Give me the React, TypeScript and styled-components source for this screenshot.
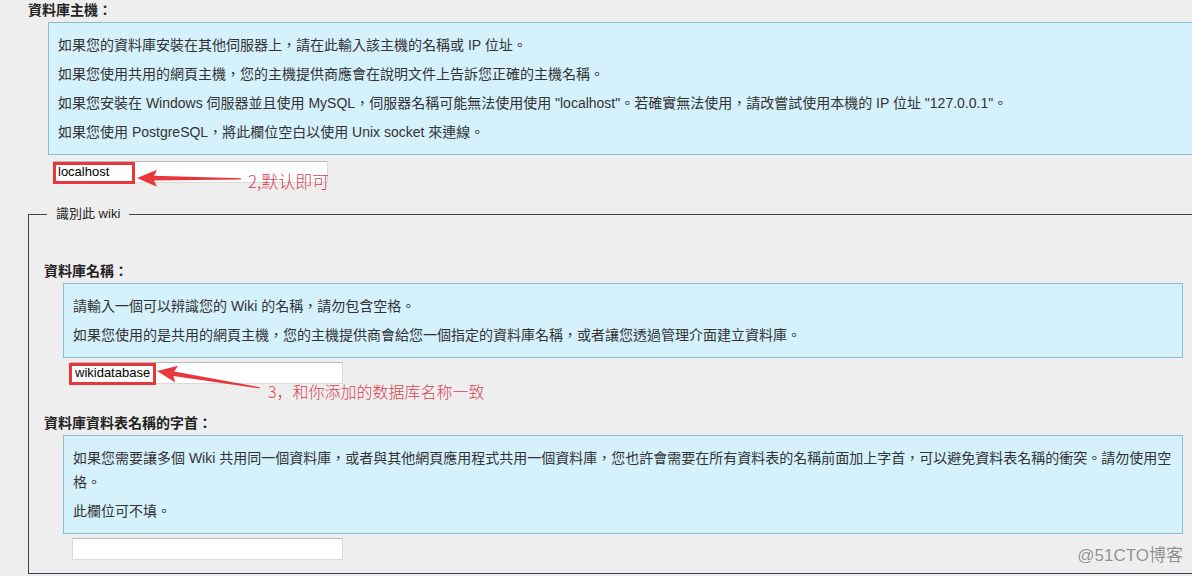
import React from "react";
import styled, { createGlobalStyle } from "styled-components";

const GlobalStyle = createGlobalStyle`
  html, body {
    margin: 0;
    padding: 0;
    background: #eeeeee;
    overflow: hidden;
  }
  body {
    font-family: "Liberation Sans", Arial, "Noto Sans CJK TC", sans-serif;
    font-size: 14px;
    color: #333333;
  }
`;

const Page = styled.div`
  position: relative;
  width: 1192px;
  height: 576px;
  overflow: hidden;
  padding-top: 1px;
  box-sizing: border-box;
`;

const TopSection = styled.section`
  padding-left: 28px;
`;

const FieldLabel = styled.div<{ $top?: number }>`
  margin: ${(p) => p.$top ?? 0}px 0 3px 0;
  font-size: 14px;
  font-weight: bold;
  line-height: 18px;
  color: #222222;
`;

const HelpBox = styled.div<{ $indent: number; $bleed?: boolean }>`
  margin-left: ${(p) => p.$indent}px;
  margin-right: ${(p) => (p.$bleed ? "-12px" : "0")};
  background: #d4f1fc;
  border: 1px solid #8ebdd0;
  padding: 10px 10px 10px 9px;
  display: flex;
  flex-direction: column;
  gap: 5px;
`;

const HelpText = styled.p`
  margin: 0;
  line-height: 24px;
  color: #333333;
`;

const InputRow = styled.div<{ $indent: number; $gap: number; $width: number }>`
  position: relative;
  margin: ${(p) => p.$gap}px 0 0 ${(p) => p.$indent}px;
  width: ${(p) => p.$width}px;
  height: 22px;
`;

const TextField = styled.input`
  box-sizing: border-box;
  display: block;
  width: 100%;
  height: 100%;
  margin: 0;
  padding: 0 4px 2px 4px;
  border: 1px solid #dadada;
  border-top-color: #b9b9b9;
  background: #ffffff;
  font-family: "Liberation Sans", Arial, sans-serif;
  font-size: 13px;
  color: #000000;
  outline: none;
`;

const Highlight = styled.div<{ $left: number; $width: number }>`
  position: absolute;
  left: ${(p) => p.$left}px;
  top: 1px;
  width: ${(p) => p.$width}px;
  height: 22px;
  box-sizing: border-box;
  border: 3px solid #e7373c;
  pointer-events: none;
`;

const ArrowSvg = styled.svg<{ $left: number; $top: number; $angle: number }>`
  position: absolute;
  left: ${(p) => p.$left}px;
  top: ${(p) => p.$top - 10}px;
  transform-origin: 0 10px;
  transform: rotate(${(p) => p.$angle}deg);
  overflow: visible;
  pointer-events: none;
`;

const Note = styled.span<{ $left: number; $top: number; $size: number }>`
  position: absolute;
  left: ${(p) => p.$left}px;
  top: ${(p) => p.$top}px;
  white-space: nowrap;
  font-family: "Noto Sans CJK SC", sans-serif;
  font-weight: 300;
  font-size: ${(p) => p.$size}px;
  line-height: 20px;
  color: #d8434f;
`;

const Fieldset = styled.fieldset`
  margin: 22px -4px 0 28px;
  padding: 39px 12px 13px 15px;
  border: 1px solid #3b4350;
  min-width: 0;
`;

const Legend = styled.legend`
  margin-left: 3px;
  padding: 0 9px;
  font-size: 13px;
  line-height: 18px;
  color: #222222;
`;

const Watermark = styled.div`
  position: absolute;
  right: 9px;
  top: 545px;
  font-family: "Liberation Sans", Arial, "Noto Sans CJK SC", sans-serif;
  font-size: 17px;
  line-height: 22px;
  color: #8e8e8e;
  text-shadow: 0 0 1px #ffffff, 0 0 1px #ffffff;
`;

function Arrow({ left, top, angle, length }: { left: number; top: number; angle: number; length: number }) {
  const L = length;
  return (
    <ArrowSvg $left={left} $top={top} $angle={angle} width={L + 2} height={20} viewBox={`0 0 ${L + 2} 20`}>
      <polygon
        points={`0,10 20,1.5 17,7.6 ${L},9.4 ${L},10.6 17,12.4 20,18.5`}
        fill="#e7373c"
      />
    </ArrowSvg>
  );
}

export default function App() {
  return (
    <Page>
      <GlobalStyle />
      <TopSection>
        <FieldLabel>資料庫主機：</FieldLabel>
        <HelpBox $indent={20} $bleed>
          <HelpText>如果您的資料庫安裝在其他伺服器上，請在此輸入該主機的名稱或 IP 位址。</HelpText>
          <HelpText>如果您使用共用的網頁主機，您的主機提供商應會在說明文件上告訴您正確的主機名稱。</HelpText>
          <HelpText>
            如果您安裝在 Windows 伺服器並且使用 MySQL，伺服器名稱可能無法使用使用 "localhost"。若確實無法使用，請改嘗試使用本機的 IP 位址 "127.0.0.1"。
          </HelpText>
          <HelpText>如果您使用 PostgreSQL，將此欄位空白以使用 Unix socket 來連線。</HelpText>
        </HelpBox>
        <InputRow $indent={25} $gap={6} $width={275}>
          <TextField defaultValue="localhost" />
          <Highlight $left={0} $width={82} />
          <Arrow left={84} top={17} angle={0.5} length={104} />
          <Note $left={195} $top={10} $size={17}>2,默认即可</Note>
        </InputRow>
      </TopSection>

      <Fieldset>
        <Legend>識別此 wiki</Legend>
        <FieldLabel>資料庫名稱：</FieldLabel>
        <HelpBox $indent={19}>
          <HelpText>請輸入一個可以辨識您的 Wiki 的名稱，請勿包含空格。</HelpText>
          <HelpText>如果您使用的是共用的網頁主機，您的主機提供商會給您一個指定的資料庫名稱，或者讓您透過管理介面建立資料庫。</HelpText>
        </HelpBox>
        <InputRow $indent={26} $gap={4} $width={273}>
          <TextField defaultValue="wikidatabase" />
          <Highlight $left={-1} $width={87} />
          <Arrow left={87} top={9} angle={9.3} length={104} />
          <Note $left={198} $top={19} $size={16}>3，和你添加的数据库名称一致</Note>
        </InputRow>

        <FieldLabel $top={30}>資料庫資料表名稱的字首：</FieldLabel>
        <HelpBox $indent={19}>
          <HelpText>
            如果您需要讓多個 Wiki 共用同一個資料庫，或者與其他網頁應用程式共用一個資料庫，您也許會需要在所有資料表的名稱前面加上字首，可以避免資料表名稱的衝突。請勿使用空格。
          </HelpText>
          <HelpText>此欄位可不填。</HelpText>
        </HelpBox>
        <InputRow $indent={28} $gap={4} $width={271}>
          <TextField defaultValue="" />
        </InputRow>
      </Fieldset>

      <Watermark>@51CTO博客</Watermark>
    </Page>
  );
}
